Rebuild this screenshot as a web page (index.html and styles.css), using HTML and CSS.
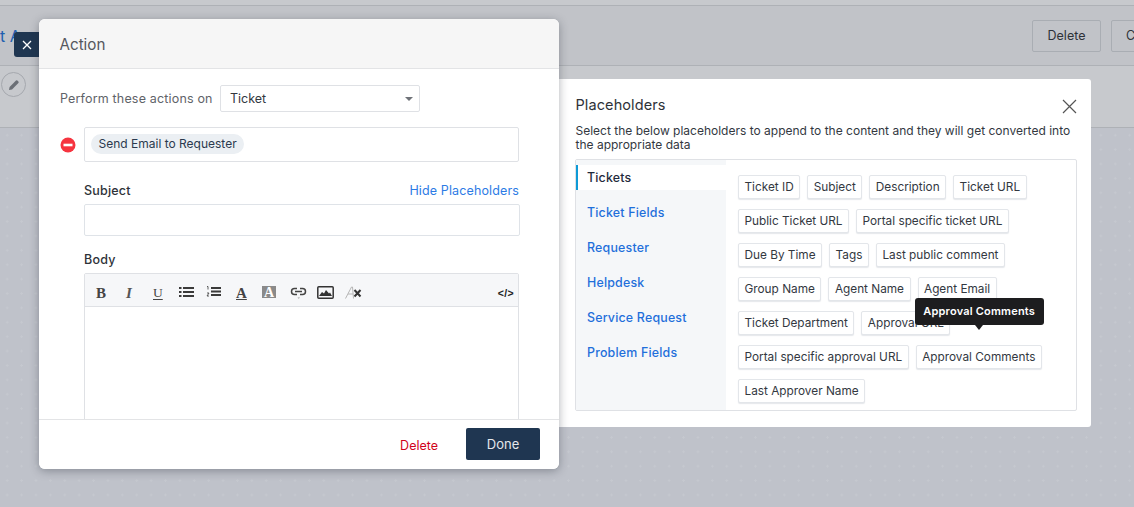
FILE: index.html
```html
<!DOCTYPE html>
<html lang="en">
<head>
<meta charset="utf-8">
<title>Action</title>
<link rel="stylesheet" href="styles.css">
</head>
<body>
<div class="page">
  <div class="topstrip"></div>
  <header class="pagehead">
    <span class="crumb">t A</span>
    <div class="headbtns"><span class="ghost">Delete</span><span class="ghost ghost-cut">Copy</span></div>
  </header>
  <div class="subrow">
    <span class="editcircle"><svg width="14" height="14" viewBox="0 0 14 14"><path d="M2 12l.6-3L9 2.600a1 1 0 0 1 1.400 0l1 1a1 1 0 0 1 0 1.400L5 11.400z" fill="#6b6f76"/></svg></span>
  </div>
  <div class="canvas"></div>
</div>

<button class="closetab"><svg width="10" height="10" viewBox="0 0 10 10"><path d="M1 1l8 8M9 1l-8 8" stroke="#fff" stroke-width="1.300"/></svg></button>

<section class="action">
  <div class="action-head">Action</div>
  <div class="action-body">
    <div class="perform">
      <span class="perform-label">Perform these actions on</span>
      <div class="select"><span>Ticket</span><i class="caret"></i></div>
    </div>
    <div class="actionrow">
      <svg class="remove" width="16" height="16" viewBox="0 0 16 16"><circle cx="8" cy="8" r="7.500" fill="#f6343f"/><rect x="3.500" y="6.700" width="9" height="2.600" fill="#fff"/></svg>
      <div class="chipbox"><span class="chip">Send Email to Requester</span></div>
    </div>
    <div class="field">
      <div class="labelrow"><label class="lbl">Subject</label><a class="hide">Hide Placeholders</a></div>
      <div class="input"></div>
    </div>
    <div class="field body-field">
      <label class="lbl">Body</label>
      <div class="editor">
        <div class="toolbar">
          <span class="tb tb-b">B</span>
          <span class="tb tb-i">I</span>
          <span class="tb tb-u">U</span>
          <svg class="ic ic-ul" width="15" height="10" viewBox="0 0 15 10"><path d="M0 1h2.500M4 1h11M0 5h2.500M4 5h11M0 9h2.500M4 9h11" stroke="#3a3a3a" stroke-width="2"/></svg>
          <svg class="ic ic-ol" width="15" height="11" viewBox="0 0 15 11"><path d="M1 0.500h1v3M1 7h2L1 10h2" stroke="#3a3a3a" stroke-width=".8" fill="none"/><path d="M5 2h10M5 5.500h10M5 9h10" stroke="#3a3a3a" stroke-width="2"/></svg>
          <span class="tb tb-a">A</span>
          <span class="tb tb-abg">A</span>
          <svg class="ic ic-link" width="17" height="14" viewBox="0 0 17 14"><path d="M7 3.500H4.500a3 3 0 0 0 0 6H7M10 3.500h2.500a3 3 0 0 1 0 6H10M5 6.500h7" stroke="#444" stroke-width="1.500" fill="none"/><path d="M7.500 12.500h2.500l-1.250 1.300z" fill="#999"/></svg>
          <svg class="ic ic-img" width="17" height="13" viewBox="0 0 17 13"><rect x=".8" y=".8" width="15.400" height="11.400" rx="1" fill="none" stroke="#333" stroke-width="1.500"/><path d="M2 10l3-4 2 1.500L9 4l3 3.500 1-1 2 3.500z" fill="#333"/></svg>
          <svg class="ic ic-clear" width="17" height="13" viewBox="0 0 17 13"><path d="M0.500 12.500L6.500 1h1l1 11.500M3 8h5" stroke="#b5b5b5" fill="none"/><path d="M9.500 4l6 6.500M15.500 4l-6 6.500" stroke="#333" stroke-width="2"/></svg>
          <code class="tb-code">&lt;/&gt;</code>
        </div>
        <div class="editarea"></div>
      </div>
    </div>
  </div>
  <footer class="action-foot">
    <a class="del">Delete</a>
    <button class="done">Done</button>
  </footer>
</section>

<aside class="ph">
  <button class="ph-close"><svg width="15" height="15" viewBox="0 0 15 15"><path d="M1 1l13 13M14 1L1 14" stroke="#555" stroke-width="1.200"/></svg></button>
  <h2 class="ph-title">Placeholders</h2>
  <p class="ph-desc">Select the below placeholders to append to the content and they will get converted into the appropriate data</p>
  <div class="ph-box">
    <nav class="ph-nav">
      <a class="ph-tab on">Tickets</a>
      <a class="ph-tab">Ticket Fields</a>
      <a class="ph-tab">Requester</a>
      <a class="ph-tab">Helpdesk</a>
      <a class="ph-tab">Service Request</a>
      <a class="ph-tab">Problem Fields</a>
    </nav>
    <div class="ph-tags">
      <div class="tagrow"><span class="tag">Ticket ID</span><span class="tag">Subject</span><span class="tag">Description</span><span class="tag">Ticket URL</span></div>
      <div class="tagrow"><span class="tag">Public Ticket URL</span><span class="tag">Portal specific ticket URL</span></div>
      <div class="tagrow"><span class="tag">Due By Time</span><span class="tag">Tags</span><span class="tag">Last public comment</span></div>
      <div class="tagrow"><span class="tag">Group Name</span><span class="tag">Agent Name</span><span class="tag">Agent Email</span></div>
      <div class="tagrow"><span class="tag">Ticket Department</span><span class="tag">Approval URL</span></div>
      <div class="tagrow"><span class="tag">Portal specific approval URL</span><span class="tag tag-tip">Approval Comments<span class="tip">Approval Comments</span></span></div>
      <div class="tagrow"><span class="tag">Last Approver Name</span></div>
    </div>
  </div>
</aside>
</body>
</html>
```
FILE: styles.css
```css
* { box-sizing: border-box; }
html, body { margin: 0; height: 507px; overflow: hidden; }
body { font-family: Inter, "Noto Sans", sans-serif; font-size: 12px; color: #12344d; position: relative; background: #bfc2ca; }
a { cursor: pointer; }
button { font: inherit; border: 0; padding: 0; }

.page { display: flex; flex-direction: column; height: 507px; }
.topstrip { height: 6px; flex: none; background: #c7c9cd; border-bottom: 1px solid #aeb1b6; }
.pagehead { height: 60px; flex: none; background: #c1c3c8; border-bottom: 1px solid #aeb1b6; display: flex; align-items: center; justify-content: space-between; overflow: hidden; }
.crumb { color: #1f5fb0; font-size: 16px; }
.headbtns { display: flex; gap: 10px; margin-right: -26px; }
.ghost { display: flex; align-items: center; justify-content: center; width: 69px; height: 32px; border: 1px solid #a9adb3; border-radius: 2px; color: #2e3238; font-size: 12.500px; }
.ghost-cut { width: 49px; justify-content: flex-start; padding-left: 14px; }
.subrow { height: 62px; flex: none; background: #c7c9cd; border-bottom: 1px solid #aeb1b6; padding: 6px 0 0 1px; }
.editcircle { display: flex; align-items: center; justify-content: center; width: 25px; height: 25px; border: 1px solid #a5a8ae; border-radius: 50%; }
.canvas { flex: 1; background-color: #bfc2ca; background-image: radial-gradient(circle, #c5c8cf 1px, transparent 1.200px); background-size: 14.400px 14.400px; }

.closetab { position: absolute; left: 14px; top: 32px; width: 26px; height: 25px; background: #1f3651; border-radius: 3px 0 0 3px; display: flex; align-items: center; justify-content: center; }

.action { position: absolute; left: 39px; top: 19px; width: 520px; height: 450px; background: #fff; border-radius: 6px; box-shadow: 0 2px 10px rgba(30,35,45,.35); display: flex; flex-direction: column; overflow: hidden; z-index: 2; }
.action-head { height: 50px; flex: none; background: #f6f6f6; border-bottom: 1px solid #e3e4e6; padding: 16px 0 0 20.500px; font-size: 15.200px; line-height: 20px; color: #55585e; }
.action-body { flex: 1; min-height: 0; overflow: hidden; padding: 16px 0 0 21px; }
.perform { display: flex; align-items: center; height: 27px; color: #5f6369; font-size: 12.500px; letter-spacing: .17px; }
.perform-label { width: 160px; }
.select { width: 200px; height: 27px; border: 1px solid #dfe1e5; border-radius: 2px; display: flex; align-items: center; justify-content: space-between; padding: 0 6px 0 9px; color: #33383f; font-size: 12.500px; letter-spacing: 0; }
.caret { width: 0; height: 0; border: 4px solid transparent; border-top: 4.500px solid #6f7278; border-bottom: 0; }
.actionrow { display: flex; align-items: center; margin-top: 15px; }
.remove { flex: none; margin-right: 8px; }
.chipbox { width: 435px; height: 35px; border: 1px solid #dfe1e5; border-radius: 2px; padding: 6px; display: flex; align-items: flex-start; }
.chip { height: 20px; line-height: 20px; padding: 0 7.500px; background: #ebeff3; border-radius: 10px; color: #2b3a4e; }
.field { margin-left: 24px; width: 436px; }
.labelrow { display: flex; justify-content: space-between; align-items: baseline; margin-top: 21px; height: 21px; width: 435px; }
.lbl { font-weight: 500; color: #2e3238; font-size: 12.500px; line-height: 16px; display: block; letter-spacing: .2px; }
.hide { color: #2c7be5; font-size: 12.500px; letter-spacing: .13px; }
.input { height: 32px; border: 1px solid #dfe3e8; border-radius: 2px; }
.body-field { margin-top: 16px; }
.editor { width: 435px; margin-top: 5px; height: 200px; border: 1px solid #dfe1e5; border-radius: 2px 2px 0 0; }
.toolbar { height: 33px; background: #f6f7f9; border-bottom: 1px solid #dfe1e5; position: relative; }
.toolbar > * { position: absolute; }
.tb { font-family: "Liberation Serif", serif; font-size: 15px; font-weight: 700; color: #444; line-height: 14px; top: 12px; }
.tb-b { left: 11px; }
.tb-i { left: 41px; font-style: italic; color: #555; }
.tb-u { left: 68px; font-size: 13.500px; font-weight: 400; text-decoration: underline; text-underline-offset: 2px; }
.ic-ul { left: 94px; top: 13px; }
.ic-ol { left: 121px; top: 12px; }
.tb-a { left: 151px; text-decoration: underline; text-underline-offset: 1px; }
.tb-abg { left: 177px; top: 12px; width: 14px; height: 12px; background: #8a8a8a; color: #fff; text-align: center; line-height: 13px; font-size: 14px; }
.ic-link { left: 205px; top: 11px; }
.ic-img { left: 232px; top: 12px; }
.ic-clear { left: 260px; top: 12px; }
.tb-code { right: 4px; top: 12px; font-family: "Liberation Sans", sans-serif; font-size: 10.500px; font-weight: 700; color: #222; letter-spacing: .35px; line-height: 14px; }
.editarea { height: 166px; }
.action-foot { height: 50px; flex: none; background: #fff; border-top: 1px solid #e3e4e6; display: flex; align-items: center; justify-content: flex-end; padding: 0 19px 2px 0; }
.del { color: #d0021b; margin-right: 28px; margin-top: 3px; font-size: 12.500px; }
.done { width: 74px; height: 32px; background: #1f3651; color: #e4e7eb; border-radius: 2px; font-size: 13px; }

.ph { position: absolute; left: 559px; top: 79px; width: 532px; height: 348px; background: #fff; border-radius: 0 3px 3px 0; padding: 16px 14px 0 16px; z-index: 1; }
.ph-close { position: absolute; right: 14.500px; top: 20px; background: none; display: flex; }
.ph-title { margin: 0; padding-left: .5px; font-weight: 400; font-size: 14.500px; line-height: 20px; color: #2e3238; letter-spacing: .1px; }
.ph-desc { margin: 9px 0 0; padding-left: .5px; font-size: 12px; line-height: 14px; color: #33383f; width: 502px; }
.ph-box { display: flex; width: 502px; height: 252px; margin-top: 7px; border: 1px solid #dfe1e5; border-radius: 2px; }
.ph-nav { width: 150px; flex: none; background: #f5f7f9; padding-top: 5px; display: flex; flex-direction: column; }
.ph-tab { height: 25px; margin-bottom: 10px; line-height: 25px; padding-left: 9px; color: #1f6fdb; font-weight: 500; font-size: 12.400px; letter-spacing: .2px; border-left: 2px solid transparent; }
.ph-tab.on { background: #fff; color: #1f2a3c; border-left-color: #0e9ad6; }
.ph-tags { padding: 15px 0 0 12px; display: flex; flex-direction: column; gap: 10px; }
.tagrow { display: flex; gap: 7px; height: 24px; }
.tag { position: relative; display: block; height: 24px; line-height: 22px; padding: 0 5.500px; background: #fff; border: 1px solid #e3e6ea; border-radius: 2px; box-shadow: 0 1px 1px rgba(40,60,90,.12); color: #33383f; font-size: 11.800px; white-space: nowrap; }
.tip { position: absolute; left: -2px; top: -48px; width: 129px; height: 27px; line-height: 26px; background: #1d1d1f; color: #fff; font-weight: 600; font-size: 11px; letter-spacing: .2px; text-align: center; border-radius: 3px; z-index: 3; }
.tip::after { content: ""; position: absolute; left: 60px; top: 27px; border: 4.500px solid transparent; border-top: 5px solid #1d1d1f; border-bottom: 0; }
```
